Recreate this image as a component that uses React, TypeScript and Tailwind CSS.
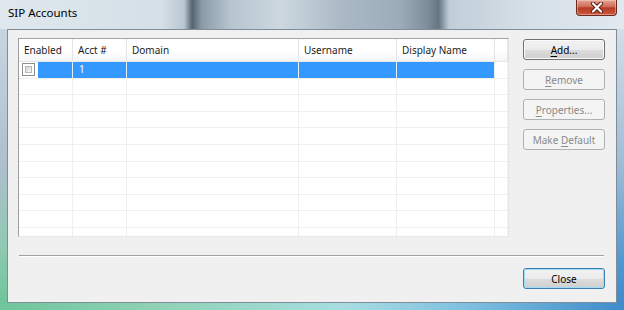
import React from "react";

type Col = { label: string; w: string };

const columns: Col[] = [
  { label: "Enabled", w: "w-[54px]" },
  { label: "Acct #", w: "w-[54px]" },
  { label: "Domain", w: "w-[172px]" },
  { label: "Username", w: "w-[98px]" },
  { label: "Display Name", w: "w-[98px]" },
];

const ROWS = 11;

const Checkbox = () => (
  <div className="w-[13px] h-[13px] border border-[#8e8f8f] bg-white p-[2px]">
    <div className="w-full h-full border border-[#b4b8bc] bg-[linear-gradient(135deg,#cfd3d8,#f7f8f9)]" />
  </div>
);

const VistaButton = ({
  children,
  disabled,
  isDefault,
}: {
  children: React.ReactNode;
  disabled?: boolean;
  isDefault?: boolean;
}) => {
  let look =
    "border-[#707070] bg-[linear-gradient(to_bottom,#f2f2f2_0%,#ebebeb_50%,#dddddd_50%,#cfcfcf_100%)] shadow-[inset_0_0_0_1px_#fbfbfb] text-black";
  if (disabled) look = "border-[#adb2b5] bg-[#f4f4f4] text-[#8a8a8a]";
  if (isDefault)
    look =
      "border-[#3c7fb1] bg-[linear-gradient(to_bottom,#f2f2f2_0%,#ebebeb_50%,#dddddd_50%,#cfcfcf_100%)] shadow-[inset_0_0_0_1px_#9fdcf6] text-black";
  return (
    <div
      className={`w-[82px] h-[21px] rounded-[3px] border flex items-center justify-center text-[10px] leading-none ${look}`}
    >
      {children}
    </div>
  );
};

const Key = ({ c }: { c: string }) => (
  <span className="underline underline-offset-[2px] decoration-1">{c}</span>
);

export default function App() {
  return (
    <div className="w-[624px] h-[310px] overflow-hidden flex flex-col font-['Noto_Sans',sans-serif] select-none">
      {/* title bar */}
      <div className="h-[29px] flex justify-between items-start bg-[linear-gradient(to_right,#dfe8ee_0%,#d4dfe7_26%,#b9c7d2_29.5%,#56646f_30.8%,#8a9aa7_32.3%,#b7c5cf_37%,#cdd8e0_45%,#aab9c5_55%,#9cacb8_64%,#7d8d9a_68.5%,#667683_70.3%,#c1ced8_72%,#d6e0e8_85%,#e1e9ee_100%)]">
        <div className="pl-[8px] pt-[5px] text-[11.5px] leading-[16px] text-black">
          SIP Accounts
        </div>
        <div className="mr-[7px] w-[41px] h-[16px] rounded-b-[4px] border border-t-0 border-[#6e2a1f] bg-[linear-gradient(to_bottom,#e3a497_0%,#cf6b58_45%,#b83a24_52%,#c9583f_100%)] shadow-[inset_0_0_0_1px_rgba(255,220,210,0.45)] flex items-center justify-center">
          <svg width="14" height="11" viewBox="0 0 14 11">
            <path d="M3 1.5 L11 9.5 M11 1.5 L3 9.5" stroke="#5a1a10" strokeWidth="4" strokeLinecap="round" />
            <path d="M3 1.5 L11 9.5 M11 1.5 L3 9.5" stroke="#ffffff" strokeWidth="2.2" strokeLinecap="round" />
          </svg>
        </div>
      </div>

      {/* middle band */}
      <div className="flex-1 flex min-h-0">
        <div className="w-[7px] bg-[linear-gradient(to_bottom,#c7d5e0_0%,#aebfcc_50%,#8fc9b2_80%,#6fc59c_100%)]" />
        <div className="w-[610px] border border-[#7e8d99] bg-[#f0f0f0] flex flex-col pl-[10px] pr-[11px] pt-[8px]">
          <div className="flex gap-[14px]">
            {/* list view */}
            <div className="w-[491px] h-[199px] bg-white border border-t-[#a3a3a3] border-l-[#9d9d9d] border-r-[#e4e4e4] border-b-[#e8e8e8] overflow-hidden flex flex-col">
              <div className="h-[23px] shrink-0 flex bg-[linear-gradient(to_bottom,#ffffff_0%,#ffffff_55%,#f4f5f7_100%)] border-b border-[#e3e5e8]">
                {columns.map((c) => (
                  <div
                    key={c.label}
                    className={`${c.w} shrink-0 border-r border-[#e2e4e7] pl-[5px] flex items-center text-[10px] text-[#1b1b1b]`}
                  >
                    {c.label}
                  </div>
                ))}
                <div className="flex-1 border-r border-[#e2e4e7]" />
              </div>
              {Array.from({ length: ROWS }).map((_, r) => (
                <div key={r} className="h-[16.6px] shrink-0 flex border-b border-[#efefef]">
                  {columns.map((c, i) => {
                    if (r === 0 && i === 0) {
                      return (
                        <div key={c.label} className={`${c.w} shrink-0 flex items-center border-r border-[#e6f0fa]`}>
                          <div className="ml-[3px] mr-[3px]">
                            <Checkbox />
                          </div>
                          <div className="flex-1 h-full bg-[#3399ff]" />
                        </div>
                      );
                    }
                    if (r === 0) {
                      return (
                        <div
                          key={c.label}
                          className={`${c.w} shrink-0 bg-[#3399ff] border-r border-[#e6f0fa] pl-[6px] flex items-center text-[10px] text-white`}
                        >
                          {i === 1 ? "1" : ""}
                        </div>
                      );
                    }
                    return <div key={c.label} className={`${c.w} shrink-0 border-r border-[#efefef]`} />;
                  })}
                  <div className="flex-1 border-r border-[#f3f3f3]" />
                </div>
              ))}
            </div>

            {/* buttons */}
            <div className="flex flex-col gap-[9px] pt-[1px]">
              <VistaButton>
                <Key c="A" />dd...
              </VistaButton>
              <VistaButton disabled>
                <Key c="R" />emove
              </VistaButton>
              <VistaButton disabled>
                <Key c="P" />roperties...
              </VistaButton>
              <VistaButton disabled>
                Make&nbsp;<Key c="D" />efault
              </VistaButton>
            </div>
          </div>

          {/* separator */}
          <div className="mt-[18px] mx-[1px] border-t border-[#a0a0a0] border-b border-b-white" />

          <div className="mt-[11px] flex justify-end">
            <div className="h-[22px] flex">
              <VistaButton isDefault>Close</VistaButton>
            </div>
          </div>
        </div>
        <div className="w-[7px] bg-[linear-gradient(to_bottom,#d2dee8_0%,#9dbcd6_50%,#4f98d2_85%,#3f8bcb_100%)]" />
      </div>

      {/* bottom frame */}
      <div className="h-[7px] shrink-0 bg-[linear-gradient(to_right,#6fc59c_0%,#8fd2b4_25%,#a7dde0_55%,#7fc0e0_75%,#3f8bcb_100%)]" />
    </div>
  );
}
